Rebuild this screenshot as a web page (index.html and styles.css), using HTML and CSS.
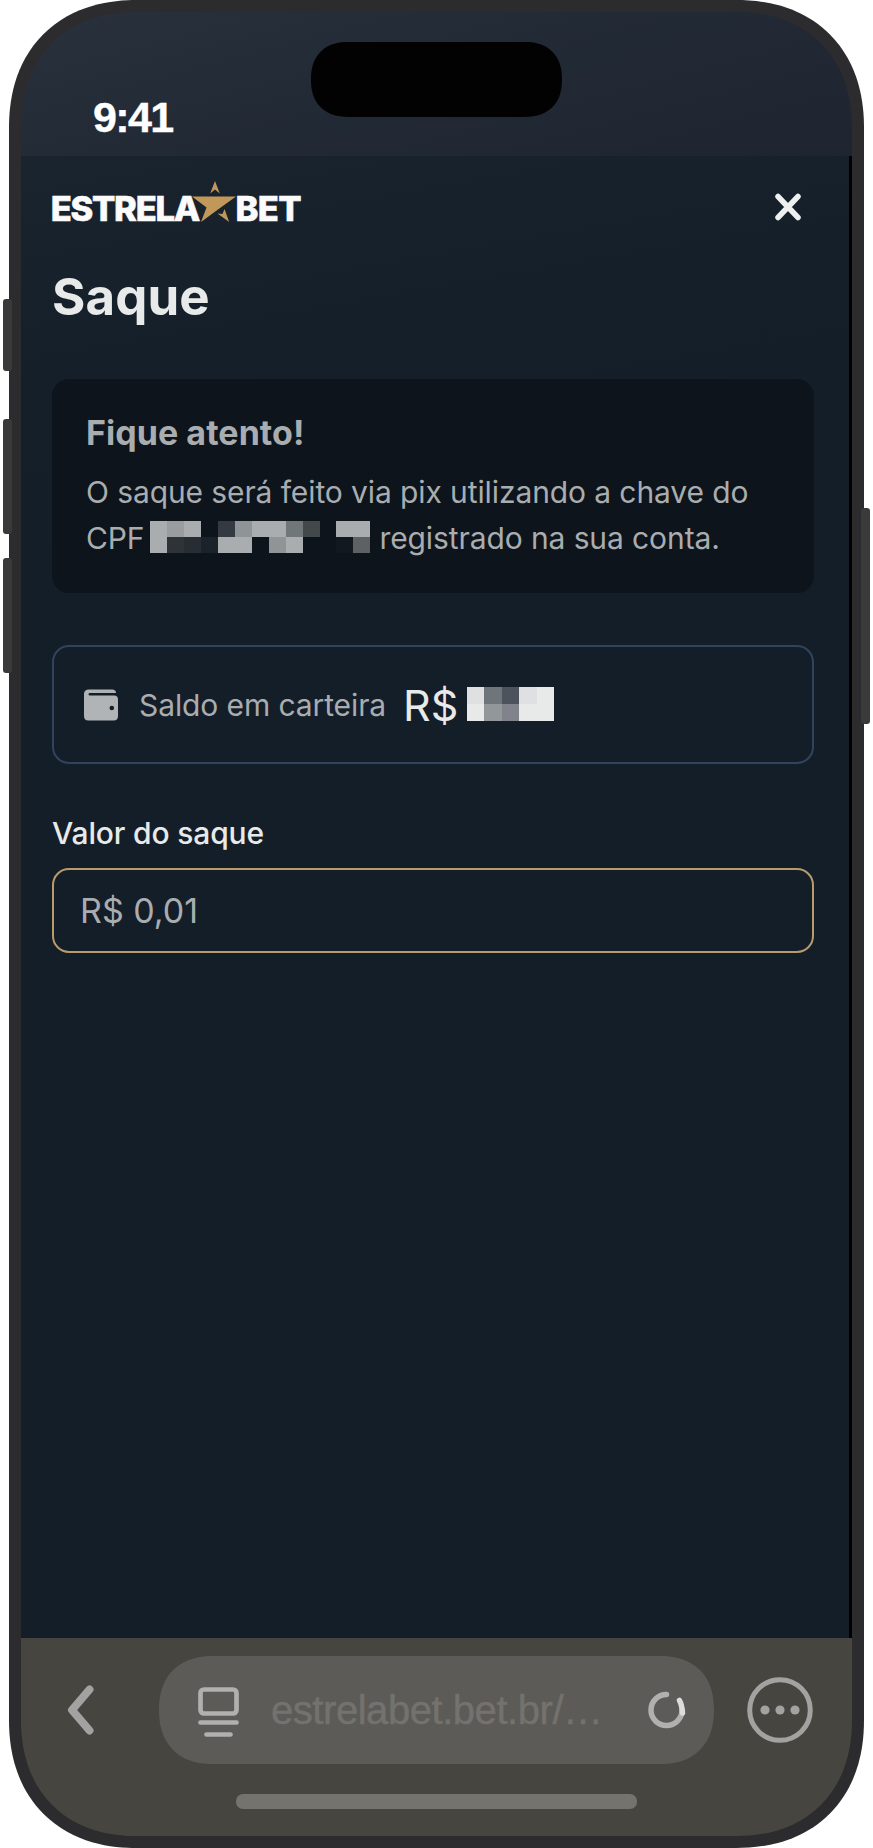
FILE: index.html
```html
<!DOCTYPE html>
<html lang="pt-BR">
<head>
<meta charset="utf-8">
<title>Saque</title>
<link rel="stylesheet" href="styles.css">
</head>
<body>
<div class="phone">
  <i class="key key-a"></i><i class="key key-b"></i><i class="key key-c"></i><i class="key key-power"></i>
  <div class="screen">
    <div class="status"><span class="time">9:41</span><span class="island"></span></div>
    <main class="app">
      <header class="top">
        <svg class="logo" width="262" height="60" viewBox="-6 0 262 60">
          <g class="brand">
            <text x="-1.300" y="41" textLength="149.500">ESTRELA</text>
            <text x="183.500" y="41" textLength="66">BET</text>
          </g>
          <g fill="#c2975a">
            <path d="M140 16.500H184L166 29.500L149 42L154.500 27.500Z"/>
            <path d="M163 1L167.800 13.500L163 9.500L158.200 13.500Z"/>
            <path d="M172.500 29L177.200 42L165.500 33.500L170.500 34Z"/>
          </g>
        </svg>
        <svg class="close" width="26" height="28" viewBox="0 0 26 28"><path d="M3 3.500L23 24.500M23 3.500L3 24.500"/></svg>
      </header>
      <h1 class="title">Saque</h1>
      <section class="notice">
        <h2 class="notice-title">Fique atento!</h2>
        <p class="line line-a">O saque será feito via pix utilizando a chave do</p>
        <p class="line line-b"><span>CPF</span>
          <svg class="mask" width="220" height="32" viewBox="0 0 220 32" shape-rendering="crispEdges">
            <path fill="#a9adb0" d="M0 0h17v32H0zM34 0h17v16H34zM102 0h34v16h-34zM68 16h34v16H68zM136 16h17v16h-17zM186 0h34v16h-34z"/>
            <path fill="#9a9da0" d="M17 0h17v16H17z"/><path fill="#8f9496" d="M85 0h17v16H85zM119 16h17v16h-17z"/>
            <path fill="#343942" d="M68 0h17v16H68z"/><path fill="#717678" d="M136 0h17v16h-17z"/><path fill="#43484b" d="M153 0h17v16h-17z"/>
            <path fill="#2e3337" d="M17 16h17v16H17z"/><path fill="#282d34" d="M34 16h17v16H34z"/><path fill="#1c2229" d="M51 16h17v16H51z"/>
            <path fill="#121820" d="M186 16h17v16h-17z"/><path fill="#5d6164" d="M203 16h17v16h-17z"/>
          </svg>
          <span>registrado na sua conta.</span></p>
      </section>
      <section class="balance">
        <svg class="wallet" width="34" height="32" viewBox="0 0 34 32">
          <path fill="#b1b4b6" fill-rule="evenodd" d="M5 0.500H28Q32 0.500 32 4H6Q4.500 4 4.500 5.300Q4.500 6.500 6 6.500H30Q34 6.500 34 10.500V27Q34 31.500 29.500 31.500H4.500Q0 31.500 0 27V5Q0 0.500 5 0.500ZM27.800 16.700A2.300 2.300 0 1 0 27.800 21.300A2.300 2.300 0 1 0 27.800 16.700Z"/>
        </svg>
        <span class="balance-label">Saldo em carteira</span>
        <span class="currency">R$</span>
        <svg class="amount" width="87" height="34" viewBox="0 0 87 34" shape-rendering="crispEdges">
          <path fill="#dfe0e2" d="M0 0h17v17H0zM52 0h18v17H52z"/><path fill="#e8eaea" d="M0 17h17v17H0zM70 0h17v34H70zM52 17h18v17H52z"/>
          <path fill="#6e757b" d="M17 0h18v17H17z"/><path fill="#4c535d" d="M35 0h17v17H35z"/><path fill="#929799" d="M17 17h18v17H17z"/><path fill="#80838b" d="M35 17h17v17H35z"/>
        </svg>
      </section>
      <label class="label">Valor do saque</label>
      <div class="field"><span>R$ 0,01</span></div>
    </main>
    <footer class="browser">
      <div class="bar">
        <svg class="back" width="28" height="52" viewBox="0 0 28 52"><path d="M22.500 5.500L5 26L22.500 46.500"/></svg>
        <div class="url">
          <svg width="42" height="50" viewBox="0 0 42 50" class="reader"><rect x="2.500" y="2.500" width="36" height="24" rx="3.500"/><path d="M2.500 35.500H38.500M8.500 47.500H32.500"/></svg>
          <span class="address">estrelabet.bet.br/…</span>
          <svg class="reload" width="38" height="38" viewBox="0 0 38 38"><path d="M18.500 3.500A15.500 15.500 0 1 0 34 19"/><path class="bright" d="M31.500 9.500Q34 14 34.500 22"/></svg>
        </div>
        <svg class="more" width="66" height="66" viewBox="0 0 66 66"><circle cx="33" cy="33" r="30.300" fill="none" stroke="#a3a2a0" stroke-width="5"/><g fill="#a3a2a0"><circle cx="18" cy="33" r="4.600"/><circle cx="33" cy="33" r="4.600"/><circle cx="48" cy="33" r="4.600"/></g></svg>
      </div>
      <div class="home"></div>
    </footer>
  </div>
</div>
</body>
</html>
```
FILE: styles.css
```css
* { box-sizing: border-box; margin: 0; padding: 0; }
body { background: #fff; font-family: Inter, sans-serif; width: 873px; height: 1848px; overflow: hidden; }
svg { display: block; flex: none; }
.phone { position: relative; width: 855px; height: 1848px; margin-left: 9px; border: 12px solid #2c2c2e; border-radius: 118px; background: #2c2c2e; }
.key { position: absolute; left: -18px; width: 9px; border-radius: 3px; background: #3a3a3b; }
.key-a { top: 287px; height: 72px; }
.key-b { top: 407px; height: 115px; }
.key-c { top: 546px; height: 115px; }
.key-power { left: auto; right: -18px; top: 496px; height: 216px; }
.screen { display: flex; flex-direction: column; width: 831px; height: 1824px; border-radius: 106px; overflow: hidden; }
.status { position: relative; height: 144px; padding: 77px 0 0 72px; background: linear-gradient(165deg, #28313c 0%, #222a35 45%, #1f2530 100%); }
.time { display: block; font: bold 43px/56px "Liberation Sans", sans-serif; letter-spacing: -1.6px; color: #fff; -webkit-text-stroke: .4px #fff; }
.island { position: absolute; left: 290px; top: 30px; width: 251px; height: 75px; border-radius: 35px; background: #020202; }
.app { height: 1482px; padding: 24px 35px 0 31px; border-right: 3px solid #000; background: linear-gradient(170deg, #19242f 0, #151f2a 220px, #141e29 500px); }
.top { display: flex; justify-content: space-between; align-items: flex-start; height: 44px; padding-right: 13px; }
.logo { margin-left: -6px; }
.brand { font: 800 34.5px Inter, sans-serif; fill: #fbfbfc; stroke: #fbfbfc; stroke-width: .6px; }
.close { margin-top: 13px; fill: none; stroke: #eeefef; stroke-width: 5.5px; stroke-linecap: round; }
.title { margin-top: 43px; font-size: 51px; line-height: 60px; font-weight: 700; letter-spacing: .1px; color: #e8eaea; }
.notice { height: 214px; margin-top: 52px; padding: 32px 34px; border-radius: 17px; background: #0d141b; color: #a9adb0; }
.notice-title { font-size: 34px; line-height: 44px; font-weight: 700; letter-spacing: .05px; }
.line { display: flex; align-items: center; height: 45px; font-size: 30px; line-height: 45px; letter-spacing: -.1px; white-space: nowrap; }
.line-a { margin-top: 15px; }
.line-b { height: 46px; }
.mask { margin: 0 9px 3px 6px; }
.balance { display: flex; align-items: center; height: 119px; margin-top: 52px; padding-left: 30px; border: 2px solid #31445b; border-radius: 17px; white-space: nowrap; }
.balance-label { width: 245px; margin-left: 21px; font-size: 30px; letter-spacing: -.1px; color: #a9adb0; }
.currency { width: 53px; margin-left: 19px; font-size: 43px; color: #e8eaea; }
.amount { margin: 0 0 2px 11px; }
.label { display: block; margin-top: 50px; font-size: 30px; line-height: 38px; font-weight: 500; letter-spacing: -.15px; color: #e8eaea; }
.field { display: flex; align-items: center; height: 85px; margin-top: 16px; padding-left: 26px; border: 2px solid #b99a6b; border-radius: 17px; font-size: 34px; color: #a9adb0; }
.browser { height: 198px; padding-top: 18px; background: #464540; }
.bar { display: flex; align-items: center; height: 108px; padding-left: 46px; }
.back { fill: none; stroke: #a3a2a0; stroke-width: 8px; stroke-linecap: round; stroke-linejoin: round; }
.url { display: flex; align-items: center; width: 555px; height: 108px; margin-left: 64px; padding-left: 39px; border-radius: 52px; background: #5c5b57; }
.reader { margin-top: 3px; fill: none; stroke: #b0b0ae; stroke-width: 4.7px; stroke-linecap: round; }
.address { width: 330px; margin-left: 31px; font: 40px/50px "Liberation Sans", sans-serif; letter-spacing: -.45px; color: #73726e; -webkit-text-stroke: .5px #73726e; white-space: nowrap; }
.reload { margin-left: 47px; fill: none; stroke: #b0b0ae; stroke-width: 5.5px; stroke-linecap: round; }
.bright { stroke: #dcdcda; }
.more { margin-left: 33px; }
.home { width: 401px; height: 15px; margin: 30px 0 0 215px; border-radius: 7px; background: #74736e; }
@supports (corner-shape: superellipse(1.15)) {
  .phone { border-radius: 128px; corner-shape: superellipse(1.15); }
  .screen { border-radius: 116px; corner-shape: superellipse(1.15); }
  .url { border-radius: 54px; corner-shape: superellipse(1.2); }
  .island { border-radius: 37px; corner-shape: superellipse(1.2); }
}
```
